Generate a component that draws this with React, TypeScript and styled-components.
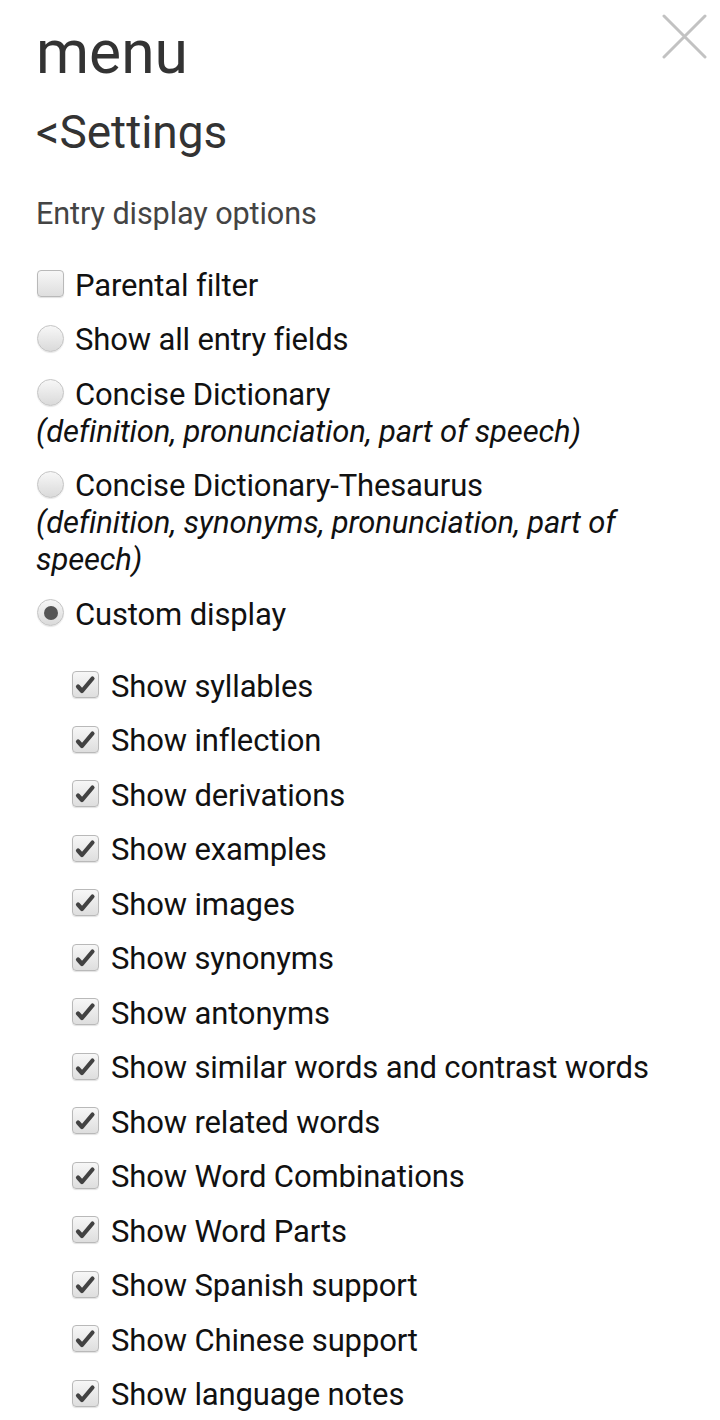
import React from "react";
import styled, { createGlobalStyle } from "styled-components";

const GlobalStyle = createGlobalStyle`
  html, body {
    margin: 0;
    padding: 0;
    background: #ffffff;
  }
  body {
    font-family: Roboto, "Noto Sans", "Liberation Sans", sans-serif;
    -webkit-font-smoothing: antialiased;
  }
`;

const Page = styled.div`
  position: relative;
  width: 720px;
  min-height: 1420px;
  box-sizing: border-box;
  padding: 18px 36px 0 36px;
  color: #111111;
`;

const CloseButton = styled.button`
  position: absolute;
  top: 14px;
  right: 13px;
  width: 45px;
  height: 45px;
  padding: 0;
  border: none;
  background: none;
  cursor: pointer;
`;

const Title = styled.h1`
  margin: 0;
  font-size: 60.5px;
  line-height: 70px;
  font-weight: 400;
  color: #333333;
`;

const BackLink = styled.div`
  margin-top: 16px;
  font-size: 46px;
  line-height: 56px;
  color: #333333;
`;

const SectionLabel = styled.div`
  margin-top: 34.5px;
  font-size: 30.6px;
  line-height: 37px;
  color: #444444;
  letter-spacing: -0.1px;
`;

const OptionList = styled.div`
  margin-top: 35px;
  display: flex;
  flex-direction: column;
  gap: 17.5px;
`;

const Option = styled.div`
  font-size: 31px;
  line-height: 37px;
  letter-spacing: -0.14px;
`;

const OptionLine = styled.label<{ $nested?: boolean }>`
  display: flex;
  align-items: center;
  gap: ${(p) => (p.$nested ? "12px" : "11px")};
  height: 37px;
  padding-left: ${(p) => (p.$nested ? "0" : "1px")};
`;

const Desc = styled.div`
  font-style: italic;
`;

const SubList = styled.div`
  margin-top: 35px;
  padding-left: 36px;
  display: flex;
  flex-direction: column;
  gap: 17.5px;
`;

const Box = styled.span`
  position: relative;
  flex: none;
  width: 25px;
  height: 25px;
  margin-bottom: 3px;
  border: 1px solid #b9b9b9;
  border-radius: 4px;
  background: linear-gradient(#f7f7f7, #dedede);
  box-shadow: 0 1px 1px rgba(0, 0, 0, 0.12);

  svg {
    position: absolute;
    left: 0;
    top: 0;
  }
`;

const Radio = styled.span<{ $checked?: boolean }>`
  position: relative;
  flex: none;
  width: 25px;
  height: 25px;
  margin-bottom: 3px;
  border: 1px solid #c4c4c4;
  border-radius: 50%;
  background: linear-gradient(#f7f7f7, #dadada);
  box-shadow: 0 1px 1px rgba(0, 0, 0, 0.1);

  &::after {
    content: "";
    display: ${(p) => (p.$checked ? "block" : "none")};
    position: absolute;
    left: 5.5px;
    top: 5.5px;
    width: 14px;
    height: 14px;
    border-radius: 50%;
    background: #555555;
  }
`;

const Check = () => (
  <svg width="25" height="25" viewBox="0 0 25 25">
    <path
      d="M5 14.5 L9 19 L19.5 6.5"
      fill="none"
      stroke="#424242"
      strokeWidth="4.2"
      strokeLinecap="round"
      strokeLinejoin="round"
    />
  </svg>
);

const Checkbox = ({ checked }: { checked?: boolean }) => (
  <Box>{checked && <Check />}</Box>
);

const subOptions = [
  "Show syllables",
  "Show inflection",
  "Show derivations",
  "Show examples",
  "Show images",
  "Show synonyms",
  "Show antonyms",
  "Show similar words and contrast words",
  "Show related words",
  "Show Word Combinations",
  "Show Word Parts",
  "Show Spanish support",
  "Show Chinese support",
  "Show language notes",
];

const App = () => (
  <Page>
    <GlobalStyle />
    <CloseButton aria-label="Close">
      <svg width="45" height="45" viewBox="0 0 45 45">
        <path
          d="M2 2 L43 43 M43 2 L2 43"
          stroke="#c2c2c2"
          strokeWidth="3"
          strokeLinecap="round"
        />
      </svg>
    </CloseButton>

    <Title>menu</Title>
    <BackLink>&lt;Settings</BackLink>
    <SectionLabel>Entry display options</SectionLabel>

    <OptionList>
      <Option>
        <OptionLine>
          <Checkbox />
          Parental filter
        </OptionLine>
      </Option>
      <Option>
        <OptionLine>
          <Radio />
          Show all entry fields
        </OptionLine>
      </Option>
      <Option>
        <OptionLine>
          <Radio />
          Concise Dictionary
        </OptionLine>
        <Desc>(definition, pronunciation, part of speech)</Desc>
      </Option>
      <Option>
        <OptionLine>
          <Radio />
          Concise Dictionary-Thesaurus
        </OptionLine>
        <Desc>(definition, synonyms, pronunciation, part of speech)</Desc>
      </Option>
      <Option>
        <OptionLine>
          <Radio $checked />
          Custom display
        </OptionLine>
      </Option>
    </OptionList>

    <SubList>
      {subOptions.map((label) => (
        <Option key={label}>
          <OptionLine $nested>
            <Checkbox checked />
            {label}
          </OptionLine>
        </Option>
      ))}
    </SubList>
  </Page>
);

export default App;
